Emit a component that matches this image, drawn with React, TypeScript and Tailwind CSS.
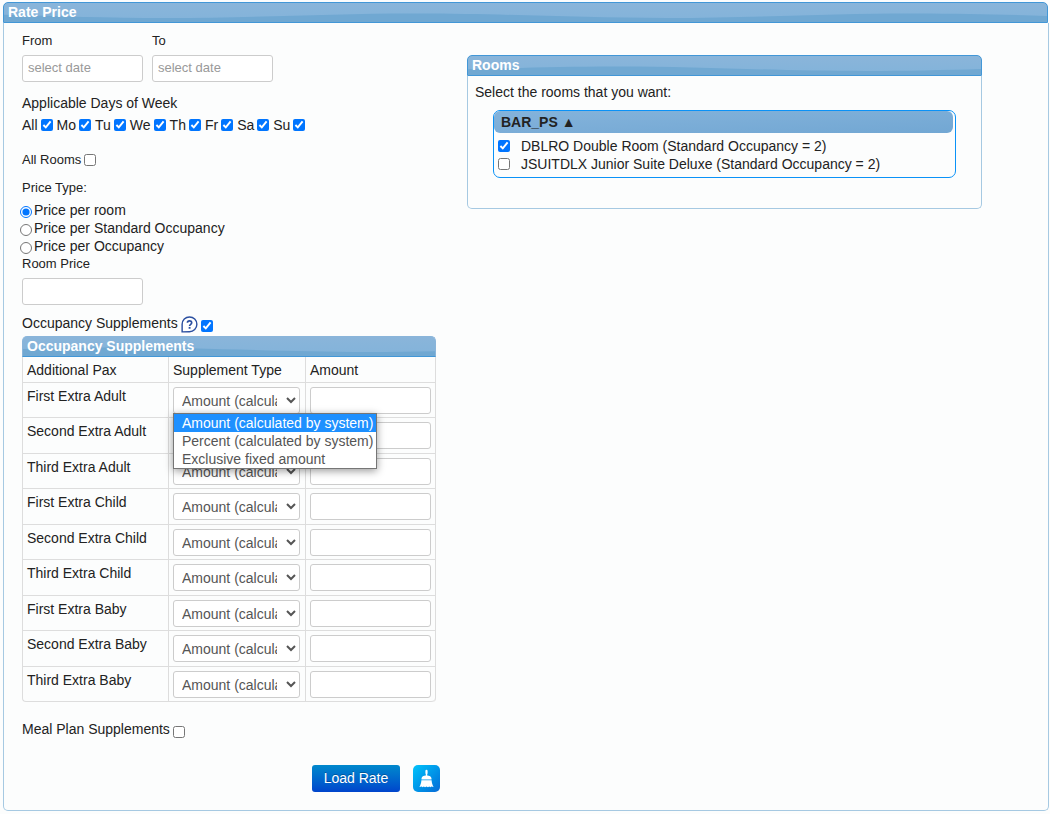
import { useState } from "react";
import type { ReactNode } from "react";

const DAYS = ["All", "Mo", "Tu", "We", "Th", "Fr", "Sa", "Su"];
const PRICE_TYPES = ["Price per room", "Price per Standard Occupancy", "Price per Occupancy"];
const SUPPLEMENT_TYPES = ["Amount (calculated by system)", "Percent (calculated by system)", "Exclusive fixed amount"];
const PAX = [
  "First Extra Adult",
  "Second Extra Adult",
  "Third Extra Adult",
  "First Extra Child",
  "Second Extra Child",
  "Third Extra Child",
  "First Extra Baby",
  "Second Extra Baby",
  "Third Extra Baby",
];
const ROOMS = [
  { code: "DBLRO", label: "DBLRO Double Room (Standard Occupancy = 2)", checked: true },
  { code: "JSUITDLX", label: "JSUITDLX Junior Suite Deluxe (Standard Occupancy = 2)", checked: false },
];

const inputClass =
  "block h-[27px] w-[121px] rounded-[3px] border border-[#ccc] bg-white px-[5px] pb-[2px] text-[13px] text-[#555] placeholder:text-[#999] outline-none";

// Glossy wave, one period is 500px and the strip is centred in the bar
function Gloss() {
  return (
    <span className="absolute inset-0 flex justify-center overflow-hidden" aria-hidden="true">
      <svg width="2500" height="20" viewBox="0 0 2500 20" className="shrink-0">
        <path
          fill="#70a8d2"
          d="M-110 15C-20 15 50 10.5 140 10.5S300 15 390 15S550 10.5 640 10.5S800 15 890 15S1050 10.5 1140 10.5S1300 15 1390 15S1550 10.5 1640 10.5S1800 15 1890 15S2050 10.5 2140 10.5S2300 15 2390 15L2500 13V20H-110Z"
        />
      </svg>
    </span>
  );
}

function TitleBar({ children, className = "border-[#4297d7]" }: { children: ReactNode; className?: string }) {
  return (
    <div className={`relative h-[21px] overflow-hidden rounded-t-[5px] border bg-linear-to-b from-[#8ab5da] to-[#82b3da] ${className}`}>
      <Gloss />
      <h2 className="relative px-1 text-sm/[19px] font-bold text-white">{children}</h2>
    </div>
  );
}

function HelpIcon() {
  return (
    <svg width="17" height="17" viewBox="0 0 18 18" aria-hidden="true">
      <path d="M1.2 16.8V8.8A7.8 7.8 0 1 1 9 16.6Z" fill="#fff" stroke="#2b4fa0" strokeWidth="1.5" />
      <path d="M6.8 7.2C6.8 4.4 11.3 4.4 11.3 7.1C11.3 8.8 9.1 8.8 9.1 10.6" fill="none" stroke="#2b4fa0" strokeWidth="1.8" />
      <rect x="8.1" y="11.6" width="2" height="1.9" fill="#2b4fa0" />
    </svg>
  );
}

function BroomIcon() {
  return (
    <svg width="17" height="19" viewBox="0 0 17 19" fill="#fff" aria-hidden="true">
      <rect x="7.4" y="0.8" width="2.2" height="4.6" rx="1.1" />
      <path d="M7.8 5H9.2V6.4C11.6 6.4 13.3 7.6 13.5 9.6V10.4H3.5V9.6C3.7 7.6 5.4 6.4 7.8 6.4Z" />
      <path d="M3.4 11.3H13.6C13.8 14 14.4 16 15.6 18L13.2 17.4L12.4 18.2L11.2 17.4L10 18.2L8.5 17.4L7 18.2L5.8 17.4L4.6 18.2L3.8 17.4L1.4 18C2.6 16 3.2 14 3.4 11.3Z" />
    </svg>
  );
}

function SupplementSelect({ label, open = false }: { label: string; open?: boolean }) {
  return (
    <div className="relative">
      <select
        aria-label={`${label} supplement type`}
        className="block h-[27px] w-[127px] rounded-[3px] border border-[#ccc] bg-white pr-[6px] pl-1 text-sm text-[#555] outline-none"
      >
        {SUPPLEMENT_TYPES.map((t) => (
          <option key={t}>{t}</option>
        ))}
      </select>
      {open && (
        <ul className="absolute top-full left-0 z-10 -mt-px w-[204px] border border-[#767676] bg-white text-sm/[18px] whitespace-nowrap text-[#555] shadow-[0_2px_8px_rgba(0,0,0,0.4)]">
          {SUPPLEMENT_TYPES.map((t, i) => (
            <li key={t} className={i === 0 ? "bg-[#1e90ff] px-2 text-white" : "px-2"}>
              {t}
            </li>
          ))}
        </ul>
      )}
    </div>
  );
}

function SupplementsTable() {
  return (
    <div className="w-[414px]">
      <TitleBar className="border-[#8ab5da] border-b-[#4297d7]">Occupancy Supplements</TitleBar>
      <table className="w-full table-fixed border-separate border-spacing-0 rounded-b-[4px] border-r border-[#ddd] text-sm/[18px]">
        <thead>
          <tr className="h-[26px] text-left">
            <th className="w-[146px] border-b border-l border-[#ddd] px-1 font-normal">Additional Pax</th>
            <th className="w-[137px] border-b border-l border-[#ddd] px-1 font-normal">Supplement Type</th>
            <th className="border-b border-l border-[#ddd] px-1 font-normal">Amount</th>
          </tr>
        </thead>
        <tbody>
          {PAX.map((p, i) => (
            <tr key={p} className="group h-[35px] align-top even:h-9">
              <td className="border-b border-l border-[#ddd] px-1 pt-1 group-last:rounded-bl-[4px]">{p}</td>
              <td className="border-b border-l border-[#ddd] px-1 pt-1 pb-[3px]">
                <SupplementSelect label={p} open={i === 0} />
              </td>
              <td className="border-b border-l border-[#ddd] px-1 pt-1 pb-[3px] group-last:rounded-br-[4px]">
                <input type="text" aria-label={`${p} amount`} className={inputClass} />
              </td>
            </tr>
          ))}
        </tbody>
      </table>
    </div>
  );
}

function RoomsPanel() {
  return (
    <section className="mt-8 w-[515px]">
      <TitleBar>Rooms</TitleBar>
      <div className="rounded-b-[5px] border border-t-0 border-[#a6c9e2] px-[7px] pt-[7px] pb-[30px]">
        <p className="text-sm/[18px]">Select the rooms that you want:</p>
        <div className="mx-[18px] mt-[9px] rounded-[7px] border border-[#0a92f7] pr-[2px] pb-1">
          <button
            type="button"
            className="block h-[22px] w-full rounded-[6px] bg-linear-to-br from-[#84b3db] to-[#72a7d3] px-[7px] text-left text-sm font-bold"
          >
            BAR_PS ▲
          </button>
          <div className="px-1 pt-1">
            {ROOMS.map((r) => (
              <label key={r.code} className="flex items-center gap-[11px] text-sm/[18px]">
                <input type="checkbox" defaultChecked={r.checked} className="size-3" />
                {r.label}
              </label>
            ))}
          </div>
        </div>
      </div>
    </section>
  );
}

export default function App() {
  const [priceType, setPriceType] = useState(PRICE_TYPES[0]);

  return (
    <main className="bg-[#fcfdfd] pt-[2px] pr-px pb-1 pl-[3px] font-['Liberation_Sans',Arial,sans-serif] text-sm/[18px] text-[#222]">
      <div className="pr-px">
        <TitleBar>Rate Price</TitleBar>
      </div>
      <div className="flex gap-[27px] rounded-b-[5px] border border-t-0 border-[#a6c9e2] pr-4 pb-[18px] pl-[18px]">
        <form className="w-[418px] shrink-0 pt-2" onSubmit={(e) => e.preventDefault()}>
          <div className="flex gap-[9px]">
            {["From", "To"].map((name) => (
              <label key={name} className="flex flex-col gap-1 text-[13px]/[20px]">
                {name}
                <input type="text" placeholder="select date" className={inputClass} />
              </label>
            ))}
          </div>

          <fieldset className="mt-3">
            <legend>Applicable Days of Week</legend>
            <div className="mt-1 flex gap-1">
              {DAYS.map((d) => (
                <label key={d} className="flex items-center gap-[3px]">
                  {d}
                  <input type="checkbox" defaultChecked className="size-3" />
                </label>
              ))}
            </div>
          </fieldset>

          <label className="mt-4 flex items-center gap-[3px] text-[13px]/[20px]">
            All Rooms
            <input type="checkbox" className="size-3" />
          </label>

          <fieldset className="mt-[9px]">
            <legend className="text-[13px]/[18px]">Price Type:</legend>
            <div className="mt-1 -ml-[2px]">
              {PRICE_TYPES.map((t) => (
                <label key={t} className="flex items-center gap-[2px]">
                  <input
                    type="radio"
                    name="priceType"
                    checked={priceType === t}
                    onChange={() => setPriceType(t)}
                    className="mt-[3px] size-3"
                  />
                  {t}
                </label>
              ))}
            </div>
          </fieldset>

          <label className="flex flex-col gap-[5px] text-[13px]/[18px]">
            Room Price
            <input type="text" className={inputClass} />
          </label>

          <div className="mt-[9px] mb-[3px] flex h-[19px] items-start gap-[3px]">
            <label htmlFor="occupancySupplements">Occupancy Supplements</label>
            <button type="button" aria-label="Help" className="mt-[2px]">
              <HelpIcon />
            </button>
            <input id="occupancySupplements" type="checkbox" defaultChecked className="mt-[6px] size-3" />
          </div>
          <SupplementsTable />

          <label className="mt-[18px] flex items-start gap-[3px]">
            Meal Plan Supplements
            <input type="checkbox" className="mt-[6px] size-3" />
          </label>

          <div className="mt-[27px] flex justify-end gap-[13px]">
            <button
              type="submit"
              className="h-[27px] w-[88px] rounded-[3px] bg-linear-to-b from-[#0088cc] to-[#0044cc] pb-[2px] text-sm text-white [text-shadow:0_-1px_0_rgba(0,0,0,0.25)]"
            >
              Load Rate
            </button>
            <button
              type="reset"
              aria-label="Clear"
              className="flex size-[27px] items-center justify-center rounded-[5px] bg-linear-to-br from-[#08c4fb] to-[#0a6ad6]"
            >
              <BroomIcon />
            </button>
          </div>
        </form>
        <RoomsPanel />
      </div>
    </main>
  );
}
